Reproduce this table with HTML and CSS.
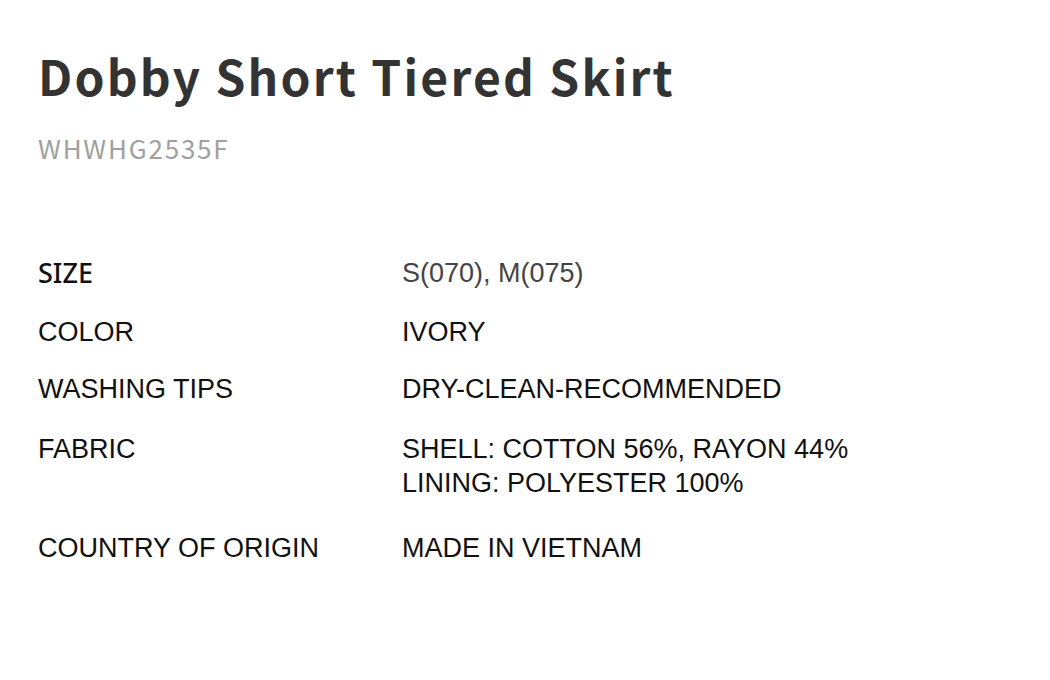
FILE: index.html
```html
<!DOCTYPE html>
<html>
<head>
<meta charset="utf-8">
<link rel="stylesheet" href="styles.css">
</head>
<body>
<div class="product">
  <h1 class="title">Dobby Short Tiered Skirt</h1>
  <p class="code">WHWHG2535F</p>
  <dl class="specs">
    <div class="row row-first">
      <dt class="label label-size">SIZE</dt>
      <dd class="value value-muted">S(070), M(075)</dd>
    </div>
    <div class="row">
      <dt class="label">COLOR</dt>
      <dd class="value">IVORY</dd>
    </div>
    <div class="row">
      <dt class="label">WASHING TIPS</dt>
      <dd class="value">DRY-CLEAN-RECOMMENDED</dd>
    </div>
    <div class="row row-tall">
      <dt class="label">FABRIC</dt>
      <dd class="value">SHELL: COTTON 56%, RAYON 44%<br>LINING: POLYESTER 100%</dd>
    </div>
    <div class="row">
      <dt class="label">COUNTRY OF ORIGIN</dt>
      <dd class="value">MADE IN VIETNAM</dd>
    </div>
  </dl>
</div>
</body>
</html>
```

FILE: styles.css
```css
html, body {
  margin: 0;
  padding: 0;
  background: #fff;
}

.product {
  padding: 43px 0 0 38px;
}

.title {
  margin: 0;
  font-family: "Noto Sans CJK KR", "Noto Sans", sans-serif;
  font-weight: 700;
  font-size: 48px;
  line-height: 64px;
  letter-spacing: 2.2px;
  color: #333;
}

.code {
  margin: 25px 0 0;
  font-family: "Noto Sans CJK KR", "Noto Sans", sans-serif;
  font-size: 26px;
  line-height: 32px;
  letter-spacing: 1.8px;
  color: #a0a0a0;
}

.specs {
  margin: 92px 0 0;
  display: flex;
  flex-direction: column;
  gap: 23px;
}

.row {
  display: flex;
  margin: 0;
}

.row-first {
  margin-bottom: 2px;
}

.row-tall {
  margin-top: 3px;
  margin-bottom: 8px;
}

.label {
  width: 364px;
  flex: none;
  margin: 0;
  font-family: "Liberation Sans", Arial, sans-serif;
  font-size: 27px;
  line-height: 34px;
  color: #111;
}

.label-size {
  font-family: "Noto Sans", "Noto Sans CJK KR", sans-serif;
  font-weight: 500;
  font-size: 27px;
}

.value {
  margin: 0;
  font-family: "Liberation Sans", Arial, sans-serif;
  font-size: 27px;
  line-height: 34px;
  color: #111;
}

.value-muted {
  color: #444;
}
```
